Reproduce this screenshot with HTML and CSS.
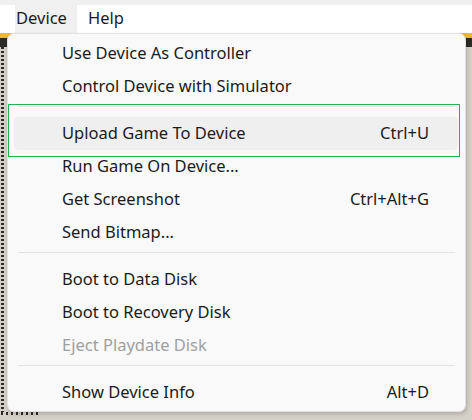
FILE: index.html
```html
<!DOCTYPE html>
<html>
<head>
<meta charset="utf-8">
<link rel="stylesheet" href="styles.css">
</head>
<body>
<div class="app">
  <div class="titlestrip"></div>
  <div class="menubar">
    <div class="mb-item active">Device</div>
    <div class="mb-item">Help</div>
  </div>
  <div class="workspace">
    <div class="ws-yellow"></div>
    <div class="ws-dark"></div>
    <div class="ws-body">
      <div class="dots-v"></div>
    </div>
    <div class="dots-h"></div>
  </div>

  <div class="popup">
    <div class="mi"><span class="label">Use Device As Controller</span></div>
    <div class="mi"><span class="label">Control Device with Simulator</span></div>
    <div class="sep"></div>
    <div class="mi hover"><span class="label">Upload Game To Device</span><span class="key">Ctrl+U</span></div>
    <div class="mi"><span class="label">Run Game On Device...</span></div>
    <div class="mi"><span class="label">Get Screenshot</span><span class="key">Ctrl+Alt+G</span></div>
    <div class="mi"><span class="label">Send Bitmap...</span></div>
    <div class="sep"></div>
    <div class="mi"><span class="label">Boot to Data Disk</span></div>
    <div class="mi"><span class="label">Boot to Recovery Disk</span></div>
    <div class="mi disabled"><span class="label">Eject Playdate Disk</span></div>
    <div class="sep"></div>
    <div class="mi"><span class="label">Show Device Info</span><span class="key">Alt+D</span></div>
  </div>
  <div class="annot"></div>
</div>
</body>
</html>
```
FILE: styles.css
```css
* { box-sizing: border-box; }
html, body { margin: 0; padding: 0; }
body {
  width: 472px;
  height: 420px;
  overflow: hidden;
  font-family: "Noto Sans", "Open Sans", sans-serif;
  font-size: 16.5px;
  color: #1b1b1b;
  background: #d5d1c8;
}
.app {
  position: relative;
  width: 472px;
  height: 420px;
  display: flex;
  flex-direction: column;
}
.titlestrip {
  height: 5px;
  background: #f0f0f0;
}
.menubar {
  height: 28px;
  background: #ffffff;
  display: flex;
  align-items: stretch;
  padding-left: 15px;
}
.mb-item {
  display: flex;
  align-items: center;
  line-height: 1;
  padding: 0 0 2px 1px;
}
.mb-item.active {
  background: #f0f0f0;
  width: 62px;
}
.mb-item + .mb-item { padding-left: 11px; }
.workspace {
  flex: 1;
  display: flex;
  flex-direction: column;
  background: #d5d1c8;
}
.ws-yellow { height: 5px; background: #f6b52c; }
.ws-dark { height: 9px; background: #2b2a27; }
.ws-body { flex: 1; display: flex; }
.dots-v {
  width: 3px;
  margin-left: 1px;
  background: repeating-linear-gradient(to bottom, #2d2c29 0 2px, transparent 2px 4px);
}
.dots-h {
  height: 3px;
  margin: 0 0 5px 1px;
  width: 40px;
  background: repeating-linear-gradient(to right, #2d2c29 0 2px, transparent 2px 5px);
}

.popup {
  position: absolute;
  left: 7px;
  top: 33px;
  width: 459px;
  height: 379px;
  background: #f9f9f9;
  border: 1px solid #e2e2e2;
  border-radius: 7px;
  box-shadow: 1px 2px 4px rgba(0,0,0,0.18);
  padding: 3px 7px 0 6px;
  display: flex;
  flex-direction: column;
}
.mi {
  height: 33px;
  flex: none;
  display: flex;
  align-items: center;
  justify-content: space-between;
  padding: 0 29px 2px 48px;
  border-radius: 4px;
  white-space: nowrap;
}
.mi.hover { background: #efefef; }
.mi.disabled { color: #a0a0a0; }
.key { color: #1b1b1b; }
.sep {
  height: 14px;
  flex: none;
  padding: 3px 3px 0 4px;
}
.sep::before {
  content: "";
  display: block;
  height: 1px;
  background: #e3e3e3;
}
.annot {
  position: absolute;
  left: 8px;
  top: 104px;
  width: 452px;
  height: 53px;
  border: 1px solid #22b14c;
}
```
